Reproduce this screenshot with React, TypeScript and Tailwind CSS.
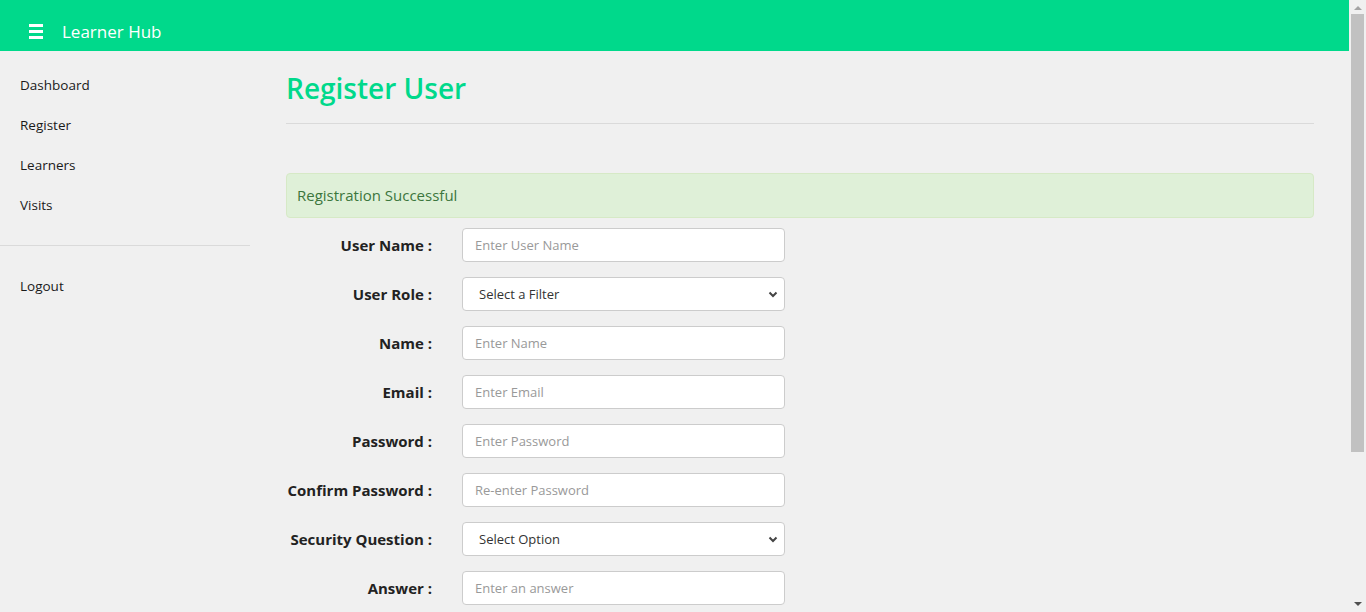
import React from 'react';

const font = { fontFamily: '"Open Sans", "Noto Sans", Arial, sans-serif' };

const navItems = ['Dashboard', 'Register', 'Learners', 'Visits'];

type Field = { label: string; placeholder: string; select?: boolean };

const fields: Field[] = [
  { label: 'User Name :', placeholder: 'Enter User Name' },
  { label: 'User Role :', placeholder: 'Select a Filter', select: true },
  { label: 'Name :', placeholder: 'Enter Name' },
  { label: 'Email :', placeholder: 'Enter Email' },
  { label: 'Password :', placeholder: 'Enter Password' },
  { label: 'Confirm Password :', placeholder: 'Re-enter Password' },
  { label: 'Security Question :', placeholder: 'Select Option', select: true },
  { label: 'Answer :', placeholder: 'Enter an answer' },
];

function Chevron() {
  return (
    <svg className="w-[10px] h-[8px] text-[#444]" viewBox="0 0 10 8" fill="none">
      <path d="M1.5 2.5 L5 6 L8.5 2.5" stroke="currentColor" strokeWidth="2" />
    </svg>
  );
}

// classic browser scrollbar on the right edge
function Scrollbar() {
  return (
    <div className="w-[17px] h-[612px] shrink-0 bg-[#f0f0f0] flex flex-col items-center">
      <svg className="mt-[5px] w-[8px] h-[5px]" viewBox="0 0 8 5">
        <path d="M0 5 L4 1 L8 5 Z" fill="#a3a3a3" />
      </svg>
      <div className="mt-[4px] w-[13px] h-[438px] bg-[#c1c1c1]" />
      <div className="flex-1" />
      <svg className="mb-[5px] w-[8px] h-[5px]" viewBox="0 0 8 5">
        <path d="M0 0 L4 4 L8 0 Z" fill="#505050" />
      </svg>
    </div>
  );
}

export default function App() {
  return (
    <div className="flex h-[612px] overflow-hidden bg-[#f0f0f0]" style={font}>
      <div className="w-[1349px] shrink-0 text-[#212529]">
        {/* Top bar */}
        <header className="h-[51px] bg-[#00d98b] flex items-center pt-[12px]">
          <div className="ml-[29px] w-[14px] flex flex-col gap-[3px]">
            <span className="h-[3px] bg-white" />
            <span className="h-[3px] bg-white" />
            <span className="h-[3px] bg-white" />
          </div>
          <span className="ml-[19px] text-white text-[17px]">Learner Hub</span>
        </header>

        <div className="flex">
          {/* Sidebar */}
          <aside className="w-[250px] shrink-0">
            <nav className="pt-[14px] pb-[20px] flex flex-col">
              {navItems.map((n) => (
                <a key={n} className="h-[40px] pl-[20px] flex items-center text-[13.5px] text-[#1a1a1a]">
                  {n}
                </a>
              ))}
            </nav>
            <div className="border-t border-[#dadada]" />
            <div className="pt-[20px]">
              <a className="h-[40px] pl-[20px] flex items-center text-[13.5px] text-[#1a1a1a]">Logout</a>
            </div>
          </aside>

          {/* Main content */}
          <main className="ml-[36px] w-[1028px]">
            <h1 className="mt-[14px] h-[45px] flex items-center text-[28px] font-semibold text-[#00d98b]">
              Register User
            </h1>
            <div className="mt-[13px] border-t border-[#dadada]" />

            <div className="mt-[49px] h-[45px] rounded-[4px] border border-[#d6e9c6] bg-[#dff0d8] text-[#3c763d] text-[15px] flex items-center px-[10px]">
              Registration Successful
            </div>

            <form className="mt-[10px] flex flex-col gap-[15px]">
              {fields.map((f) => (
                <div key={f.label} className="flex items-center">
                  <label className="w-[146px] text-right text-[15px] font-bold text-[#222] whitespace-nowrap">
                    {f.label}
                  </label>
                  {f.select ? (
                    <div className="ml-[30px] w-[323px] h-[34px] relative">
                      <select className="appearance-none w-full h-full bg-white border border-[#ccc] rounded-[4px] pl-[16px] pt-[2px] text-[13px] text-[#333] outline-none">
                        <option>{f.placeholder}</option>
                      </select>
                      <span className="absolute right-[7px] top-[13px] pointer-events-none">
                        <Chevron />
                      </span>
                    </div>
                  ) : (
                    <input
                      placeholder={f.placeholder}
                      className="ml-[30px] w-[323px] h-[34px] bg-white border border-[#ccc] rounded-[4px] px-[12px] text-[13px] text-[#333] placeholder:text-[#999] outline-none"
                    />
                  )}
                </div>
              ))}
            </form>
          </main>
        </div>
      </div>
      <Scrollbar />
    </div>
  );
}
